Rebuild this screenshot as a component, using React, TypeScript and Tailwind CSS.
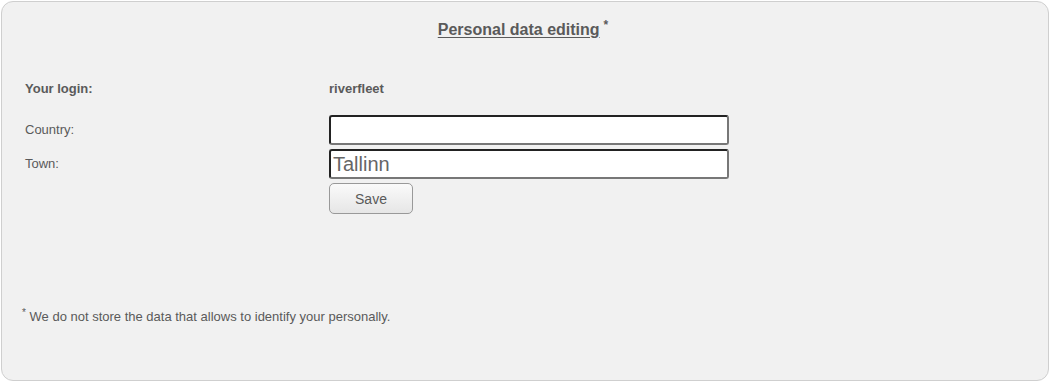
export default function App() {
  return (
    <div className="w-[1050px] h-[382px] bg-white p-px font-['Liberation_Sans',Arial,sans-serif] text-[#5a5a5a]">
      <div className="w-[1048px] h-[380px] border border-[#cfcfcf] rounded-[12px] bg-[#f1f1f1]">
        {/* ── Title ───────────────────────── */}
        <div className="pt-[19px] pr-[4px] text-center text-[16px] leading-[18px]">
          <span className="font-bold underline underline-offset-2">Personal data editing</span>
          <sup className="ml-[4px] text-[12px] font-bold">*</sup>
        </div>

        {/* ── Form ────────────────────────── */}
        <div className="mt-[42px] pl-[23px] grid grid-cols-[304px_400px] text-[13px] leading-[16px]">
          <div className="font-bold">Your login:</div>
          <div className="font-bold">riverfleet</div>

          <div className="mt-[18px] h-[30px] flex items-center">Country:</div>
          <div className="mt-[18px]">
            <input
              type="text"
              defaultValue=""
              className="w-[400px] h-[30px] bg-white border-2 border-t-[#222] border-l-[#222] border-r-[#777] border-b-[#777] rounded-[3px] px-[2px] text-[20px] text-[#666] outline-none"
            />
          </div>

          <div className="mt-[4px] h-[30px] flex items-center">Town:</div>
          <div className="mt-[4px]">
            <input
              type="text"
              defaultValue="Tallinn"
              className="w-[400px] h-[30px] bg-white border-2 border-t-[#222] border-l-[#222] border-r-[#777] border-b-[#777] rounded-[3px] px-[2px] text-[20px] text-[#666] outline-none font-['Liberation_Sans',Arial,sans-serif]"
            />
          </div>

          <div />
          <div className="mt-[4px]">
            <button className="w-[84px] h-[31px] rounded-[5px] border border-[#999] bg-gradient-to-b from-[#fafafa] to-[#e6e6e6] text-[14px] text-[#5a5a5a]">
              Save
            </button>
          </div>
        </div>

        {/* ── Footnote ────────────────────── */}
        <div className="mt-[95px] pl-[20px] text-[13px] leading-[16px]">
          <sup className="text-[10px]">*</sup> We do not store the data that allows to identify your personally.
        </div>
      </div>
    </div>
  )
}
